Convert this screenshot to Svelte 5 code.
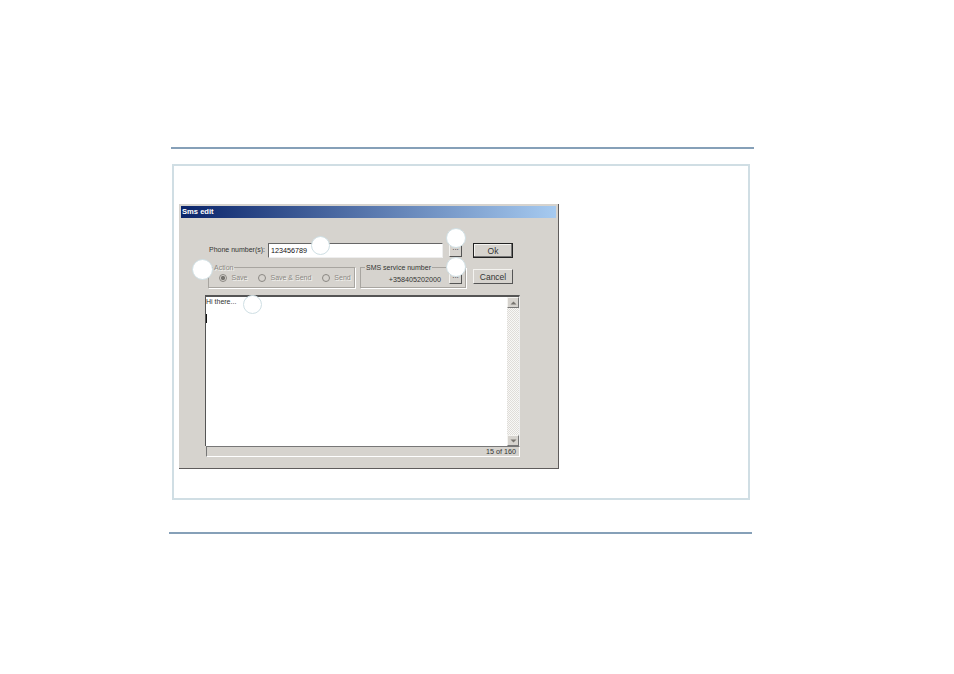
<script>
  // numbered callout circles sit on top of the dialog, coords relative to it
  const markers = [
    { x: 141, y: 41.5, r: 9.5 },
    { x: 276.5, y: 34, r: 10 },
    { x: 23, y: 65, r: 10.5 },
    { x: 276.5, y: 62.5, r: 10 },
    { x: 73, y: 100, r: 9.5 }
  ];
  const radios = [
    { label: 'Save', checked: true },
    { label: 'Save & Send', checked: false },
    { label: 'Send', checked: false }
  ];
</script>

<div class="page">
  <div class="rule top-rule"></div>
  <div class="box">
    <div class="dialog">
      <div class="titlebar">Sms edit</div>
      <div class="content">
        <div class="top">
          <div class="fields">
            <div class="phone">
              <span class="phone-label">Phone number(s):</span>
              <div class="input">123456789</div>
              <button class="dots">...</button>
            </div>
            <div class="groups">
              <fieldset class="group action">
                <legend class="disabled">Action</legend>
                {#each radios as radio}
                  <span class="radio disabled">
                    <i class="dot" class:checked={radio.checked}></i>{radio.label}
                  </span>
                {/each}
              </fieldset>
              <fieldset class="group service">
                <legend>SMS service number</legend>
                <span class="number">+358405202000</span>
                <button class="dots">...</button>
              </fieldset>
            </div>
          </div>
          <div class="actions">
            <button class="btn default">Ok</button>
            <button class="btn">Cancel</button>
          </div>
        </div>
        <div class="editor">
          <div class="text">
            <div>Hi there...</div>
            <div class="caret"></div>
          </div>
          <div class="scrollbar">
            <div class="arrow"><svg width="7" height="4" viewBox="0 0 7 4"><path d="M3.5 0.5L6.5 3.5H0.5Z" fill="#77746f" /></svg></div>
            <div class="track"></div>
            <div class="arrow"><svg width="7" height="4" viewBox="0 0 7 4"><path d="M0.5 0.5H6.5L3.5 3.5Z" fill="#77746f" /></svg></div>
          </div>
        </div>
        <div class="status">15 of 160</div>
      </div>
      {#each markers as m}
        <div class="marker" style="left: {m.x - m.r}px; top: {m.y - m.r}px; width: {m.r * 2}px; height: {m.r * 2}px"></div>
      {/each}
    </div>
  </div>
  <div class="rule bottom-rule"></div>
</div>

<style>
  :global(body) {
    margin: 0;
    background: #fff;
  }

  .page {
    width: 954px;
    height: 674px;
    padding-top: 147px;
    box-sizing: border-box;
    overflow: hidden;
    font-family: "Liberation Sans", Arial, sans-serif;
    font-size: 7px;
    color: #333;
  }

  .rule {
    width: 583px;
    height: 2px;
    background: #86a0b8;
  }
  .top-rule {
    margin-left: 171px;
  }
  .bottom-rule {
    margin-left: 169px;
    margin-top: 32px;
  }

  .box {
    width: 578px;
    height: 336px;
    margin: 15px 0 0 172px;
    padding: 38px 0 0 5px;
    box-sizing: border-box;
    border: 2px solid #d0dee4;
  }

  .dialog {
    position: relative;
    width: 380px;
    height: 265px;
    box-sizing: border-box;
    padding: 2px;
    background: #d6d3ce;
    border-right: 1px solid #5f5c5c;
    border-bottom: 1px solid #5f5c5c;
  }

  .titlebar {
    height: 12px;
    line-height: 12px;
    padding-left: 1px;
    font-size: 7.6px;
    font-weight: bold;
    color: #fff;
    background: linear-gradient(to right, #0a246a, #a6caf0);
  }

  .content {
    padding: 25px 0 0 24px;
  }

  .top {
    display: flex;
    gap: 7px;
  }

  .fields {
    width: 261px;
  }

  .phone {
    display: flex;
    align-items: flex-start;
    height: 15px;
    padding-left: 4px;
  }
  .phone-label {
    width: 59px;
    line-height: 14px;
  }
  .input {
    width: 175px;
    height: 15px;
    box-sizing: border-box;
    line-height: 13px;
    padding-left: 2px;
    font-size: 7.2px;
    color: #111;
    background: #fff;
    border: 1px solid;
    border-color: #666 #eee #eee #666;
  }
  .phone .dots {
    margin-left: 6px;
    height: 14px;
  }

  .dots {
    width: 13px;
    height: 13px;
    padding: 0 0 4px;
    font: 8px/8px "Liberation Sans", Arial, sans-serif;
    color: #333;
    background: #d6d3ce;
    border: 1px solid;
    border-color: #f4f3f0 #555 #555 #f4f3f0;
  }

  .groups {
    display: flex;
    margin-top: 6px;
    height: 24px;
  }

  .group {
    display: flex;
    align-items: center;
    height: 24px;
    box-sizing: border-box;
    margin: 0;
    padding: 0;
    min-width: 0;
    border: 1px solid #a8a5a0;
    box-shadow: 1px 1px 0 #fff;
  }
  .group legend {
    padding: 0 1px;
    line-height: 7px;
  }
  .action {
    width: 147px;
    margin-left: 3px;
    padding-left: 10px;
    gap: 10.5px;
  }
  .action legend {
    margin-left: -6px;
  }
  .service {
    width: 106px;
    margin-left: 5px;
    justify-content: flex-end;
    padding-right: 3px;
  }
  .service legend {
    margin-left: 4px;
  }
  .service .dots {
    margin-left: 8px;
    margin-top: -3px;
  }
  .number {
    font-size: 7.2px;
    white-space: nowrap;
  }

  .disabled {
    color: #8b8883;
    text-shadow: 1px 1px 0 #f4f3f0;
  }

  .radio {
    display: flex;
    align-items: center;
    gap: 4.5px;
    white-space: nowrap;
    margin-top: -3px;
  }
  .dot {
    display: block;
    width: 8px;
    height: 8px;
    box-sizing: border-box;
    border: 1px solid #8b8883;
    border-radius: 50%;
    background: #d6d3ce;
  }
  .dot.checked {
    background: radial-gradient(circle, #77746f 45%, #d6d3ce 55%);
  }

  .actions {
    display: flex;
    flex-direction: column;
    gap: 11px;
  }
  .btn {
    width: 40px;
    height: 15px;
    padding: 0;
    font: 8.5px "Liberation Sans", Arial, sans-serif;
    color: #333;
    background: #d6d3ce;
    border: 1px solid;
    border-color: #f4f3f0 #555 #555 #f4f3f0;
  }
  .btn.default {
    border-color: #222;
    box-shadow: inset -1px -1px 0 #777, inset 1px 1px 0 #f4f3f0;
  }

  .editor {
    display: flex;
    width: 315px;
    height: 151px;
    margin-top: 7px;
    box-sizing: border-box;
    background: #fff;
    border-top: 2px solid #555;
    border-left: 1px solid #555;
    border-right: 1px solid #eee;
  }
  .text {
    flex: 1;
    padding-top: 1px;
    line-height: 8px;
  }
  .caret {
    width: 1px;
    height: 9px;
    margin-top: 8px;
    background: #111;
  }
  .scrollbar {
    width: 12px;
    display: flex;
    flex-direction: column;
  }
  .arrow {
    display: flex;
    align-items: center;
    justify-content: center;
    height: 11px;
    background: #d6d3ce;
    border: 1px solid;
    border-color: #f4f3f0 #777 #777 #f4f3f0;
    box-sizing: border-box;
  }
  .track {
    flex: 1;
    background: repeating-conic-gradient(#dfdcd8 0 25%, #f8f8f6 0 50%) 0 0 / 2px 2px;
  }

  .status {
    width: 314px;
    height: 11px;
    margin-left: 1px;
    box-sizing: border-box;
    padding-right: 3px;
    font-size: 7.2px;
    line-height: 10px;
    text-align: right;
    border-top: 1px solid #777;
    border-left: 1px solid #777;
    border-bottom: 1px solid #fff;
    border-right: 1px solid #fff;
  }

  .marker {
    position: absolute;
    box-sizing: border-box;
    background: #fff;
    border: 1px solid #cfdfe4;
    border-radius: 50%;
  }
</style>
